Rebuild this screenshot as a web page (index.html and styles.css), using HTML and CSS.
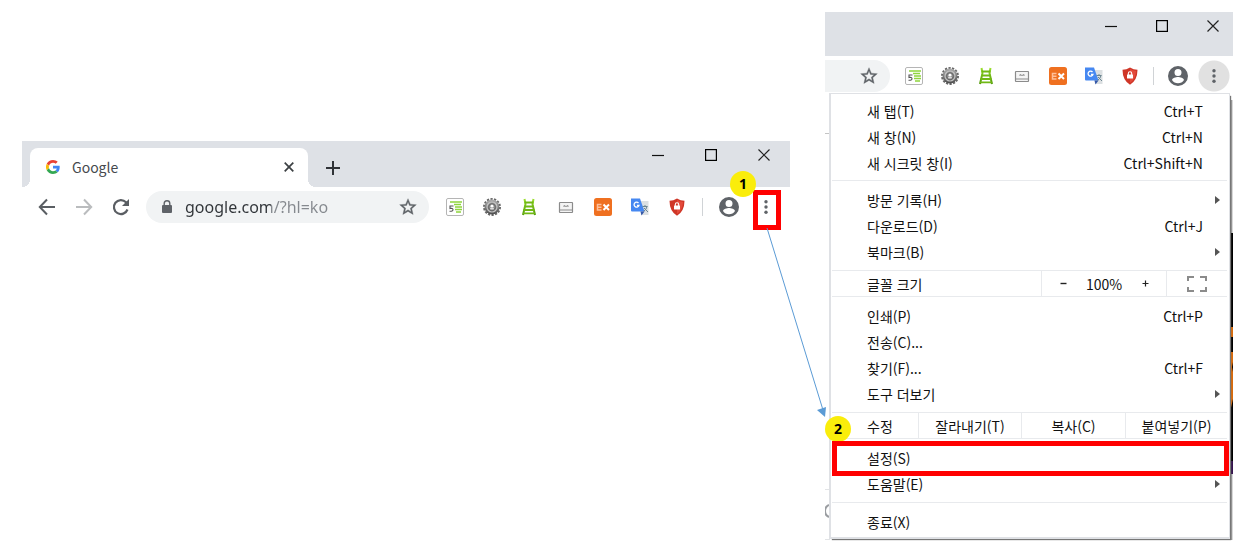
FILE: index.html
```html
<!DOCTYPE html>
<html lang="ko">
<head>
<meta charset="utf-8">
<title>Chrome 설정 메뉴 열기</title>
<link rel="stylesheet" href="styles.css">
</head>
<body>
<svg class="sprite" aria-hidden="true">
  <defs>
    <linearGradient id="metal" x1="0" y1="0" x2="0" y2="1"><stop offset="0" stop-color="#b0b0b0"/><stop offset="1" stop-color="#4c4c4c"/></linearGradient>
    <linearGradient id="leaf" x1="0" y1="0" x2="0" y2="1"><stop offset="0" stop-color="#9be02c"/><stop offset="1" stop-color="#4f960a"/></linearGradient>
  </defs>
  <symbol id="star" viewBox="0 0 24 24"><path fill="#5f6368" stroke="#5f6368" stroke-width=".4" d="M22 9.24l-7.19-.62L12 2 9.19 8.63 2 9.24l5.46 4.73L5.82 21 12 17.27 18.18 21l-1.63-7.03L22 9.24zM12 15.4l-3.76 2.27 1-4.28-3.32-2.88 4.38-.38L12 6.1l1.71 4.04 4.38.38-3.32 2.88 1 4.28L12 15.4z"/></symbol>
  <symbol id="min" viewBox="0 0 12 12"><path d="M0 6.500H12" stroke="#111" stroke-width="1.200"/></symbol>
  <symbol id="max" viewBox="0 0 12 12"><rect x=".6" y=".6" width="10.800" height="10.800" fill="none" stroke="#000" stroke-width="1.200"/></symbol>
  <symbol id="close" viewBox="0 0 12 12"><path d="M.5.500l11 11M11.500.500l-11 11" stroke="#222" stroke-width="1.200"/></symbol>
  <symbol id="notes" viewBox="0 0 18 18"><rect x=".5" y=".5" width="17" height="17" rx="1.500" fill="#fff" stroke="#b5b5b5"/><path d="M4 4h12M8 6.500h7M9 9h7M9 11.500h7M10 14h5" stroke="#8fd53d" stroke-width="1.400"/><path d="M7.500 8H4v2.500q3-.6 3 1.200T3.500 13.300" fill="none" stroke="#555" stroke-width="1.100"/></symbol>
  <symbol id="gear" viewBox="0 0 18 18"><circle cx="9" cy="9" r="8" fill="none" stroke="#666" stroke-width="2" stroke-dasharray="2.200 1.390"/><circle cx="9" cy="9" r="7.500" fill="url(#metal)"/><circle cx="9" cy="9" r="5" fill="none" stroke="#c4c4c4" stroke-width="1.200"/><circle cx="9" cy="9" r="3.300" fill="#999" stroke="#666"/><circle cx="9" cy="8.200" r="1.400" fill="#fff"/><path d="M7.200 10.800h3.600" stroke="#eee" stroke-width="1.200"/></symbol>
  <symbol id="ladder" viewBox="0 0 18 18"><path d="M4.500 1l1 5-2.500 11M13.500 1l-1 5L15 17" fill="none" stroke="url(#leaf)" stroke-width="2"/><path d="M4.500 4.500h9M4.500 8.500h9M3.500 12h11M3 15.300h12" stroke="#70b814" stroke-width="1.800"/></symbol>
  <symbol id="laptop" viewBox="0 0 18 18"><rect x="2.500" y="4.500" width="13" height="10" rx=".5" fill="#f4f4f4" stroke="#8b8b8b" stroke-width="1.200"/><path d="M3 12h12" stroke="#8b8b8b"/><path d="M7 9V7.500l2 1 2-1V9" fill="none" stroke="#8b8b8b"/></symbol>
  <symbol id="ex" viewBox="0 0 18 18"><rect width="18" height="18" rx="2.500" fill="#ef7020"/><path d="M7.500 6.500h-4v5.500h4M3.500 9.200h4" stroke="#ffc09a" stroke-width="1.500" fill="none"/><path d="M9.500 6.500l5.500 5.500M15 6.500L9.500 12" stroke="#fff" stroke-width="2"/></symbol>
  <symbol id="translate" viewBox="0 0 18 18"><path d="M8 3h9.500v14H10z" fill="#dce0e2"/><path d="M0 .5h9l4.500 13H1Q0 13.500 0 12.500z" fill="#4688f1"/><path d="M9.500 13.500h4l-3 4z" fill="#3457a8"/><path d="M7.500 5A2.500 2.500 0 1 0 8 7.300H6" fill="none" stroke="#fff" stroke-width="1.300"/><path d="M11.500 8.500h5M14 7v1.500M16 8.500q-.5 3-3.500 5M13 10l4 4" fill="none" stroke="#6b8590"/></symbol>
  <symbol id="shield" viewBox="0 0 18 18"><path d="M9 .5q3.500 2.200 7.500 2.200Q16.500 13 9 17.800 1.500 13 1.500 2.700 5.500 2.700 9 .5z" fill="#cf3627"/><path d="M9 2.100q2.800 1.700 6.100 1.900Q14.600 12.200 9 16z" fill="#e34a3b"/><rect x="6" y="7.500" width="6" height="4" rx=".5" fill="#fff"/><path d="M7.300 8V6.500a1.700 1.700 0 0 1 3.400 0V8" fill="none" stroke="#fff" stroke-width="1.100"/></symbol>
  <symbol id="avatar" viewBox="2 2 20 20"><path fill="#5f6368" d="M12 2a10 10 0 1 0 0 20 10 10 0 0 0 0-20zm0 3a3.500 3.500 0 1 1 0 7 3.500 3.500 0 0 1 0-7zm0 14.200a7.200 7.200 0 0 1-6-3.200c0-2 4-3.100 6-3.100s6 1.100 6 3.100a7.200 7.200 0 0 1-6 3.200z"/></symbol>
  <symbol id="dots" viewBox="0 0 4 16"><g fill="#5f6368"><circle cx="2" cy="2.700" r="1.700"/><circle cx="2" cy="8" r="1.700"/><circle cx="2" cy="13.300" r="1.700"/></g></symbol>
</svg>

<main class="guide">
  <section class="browser browser-main" aria-label="Google Chrome">
    <header class="strip">
      <div class="tab">
        <svg class="favicon" viewBox="0 0 48 48"><path fill="#ea4335" d="M24 9.500c3.540 0 6.710 1.220 9.210 3.600l6.850-6.850C35.900 2.380 30.470 0 24 0 14.620 0 6.510 5.380 2.560 13.220l7.980 6.190C12.430 13.720 17.740 9.500 24 9.500z"/><path fill="#4285f4" d="M46.980 24.550c0-1.570-.15-3.090-.38-4.550H24v9.020h12.940c-.58 2.960-2.260 5.480-4.780 7.180l7.730 6c4.510-4.180 7.090-10.360 7.090-17.650z"/><path fill="#fbbc05" d="M10.530 28.590a14.500 14.500 0 0 1 0-9.180l-7.980-6.190a24 24 0 0 0 0 21.560l7.980-6.190z"/><path fill="#34a853" d="M24 48c6.480 0 11.930-2.130 15.890-5.810l-7.730-6c-2.150 1.450-4.920 2.300-8.160 2.300-6.260 0-11.570-4.220-13.470-9.910l-7.980 6.190C6.510 42.620 14.620 48 24 48z"/></svg>
        <span class="tab-title">Google</span>
        <button class="plain" aria-label="탭 닫기"><svg width="10" height="10" viewBox="0 0 10 10"><path d="M.7.700l8.600 8.600M9.300.700L.7 9.300" stroke="#3c4043" stroke-width="1.700"/></svg></button>
      </div>
      <button class="plain new-tab" aria-label="새 탭"><svg width="14" height="14" viewBox="0 0 14 14"><path d="M7 0v14M0 7h14" stroke="#303337" stroke-width="2"/></svg></button>
      <div class="window-controls">
        <button class="plain" aria-label="최소화"><svg width="12" height="12"><use href="#min"/></svg></button>
        <button class="plain" aria-label="최대화"><svg width="12" height="12"><use href="#max"/></svg></button>
        <button class="plain" aria-label="닫기"><svg width="12" height="12"><use href="#close"/></svg></button>
      </div>
    </header>
    <div class="toolbar">
      <nav class="nav">
        <button class="plain" aria-label="뒤로"><svg width="18" height="18" viewBox="0 0 18 18"><path d="M9 1.500L1.800 9 9 16.500M2 9h15" fill="none" stroke="#5a5e63" stroke-width="2"/></svg></button>
        <button class="plain" aria-label="앞으로"><svg width="18" height="18" viewBox="0 0 18 18"><path d="M9 1.500L16.200 9 9 16.500M16 9H1" fill="none" stroke="#babcbe" stroke-width="2"/></svg></button>
        <button class="plain" aria-label="새로고침"><svg width="18" height="18" viewBox="0 0 18 18"><path d="M15.500 11.500A7 7 0 1 1 14 4.200L15.500 6" fill="none" stroke="#5a5e63" stroke-width="2.200"/><path d="M17 1v7h-7z" fill="#5a5e63"/></svg></button>
      </nav>
      <div class="omnibox">
        <svg width="10" height="14" viewBox="0 0 10 14"><rect y="5" width="10" height="8" rx="1" fill="#5f6368"/><path d="M2.200 6V3.500a2.800 2.800 0 0 1 5.600 0V6" fill="none" stroke="#5f6368" stroke-width="1.400"/></svg>
        <input class="url" type="text" aria-label="주소창" value="google.com/?hl=ko">
        <button class="plain" aria-label="북마크 추가"><svg width="20" height="20"><use href="#star"/></svg></button>
      </div>
      <div class="extensions">
        <button class="plain" aria-label="메모"><svg><use href="#notes"/></svg></button>
        <button class="plain" aria-label="도구"><svg><use href="#gear"/></svg></button>
        <button class="plain" aria-label="사다리"><svg><use href="#ladder"/></svg></button>
        <button class="plain" aria-label="화면"><svg><use href="#laptop"/></svg></button>
        <button class="plain" aria-label="EX"><svg><use href="#ex"/></svg></button>
        <button class="plain" aria-label="번역"><svg><use href="#translate"/></svg></button>
        <button class="plain" aria-label="보안"><svg><use href="#shield"/></svg></button>
      </div>
      <span class="divider"></span>
      <button class="plain profile" aria-label="프로필"><svg width="20" height="20"><use href="#avatar"/></svg></button>
      <button class="plain more" aria-label="맞춤설정 및 제어"><svg width="4" height="16"><use href="#dots"/></svg><span class="mark mark-more"></span><span class="badge badge-one">1</span></button>
    </div>
  </section>

  <section class="browser browser-menu" aria-label="Chrome 메뉴">
    <header class="strip">
      <div class="window-controls">
        <button class="plain" aria-label="최소화"><svg width="12" height="12"><use href="#min"/></svg></button>
        <button class="plain" aria-label="최대화"><svg width="12" height="12"><use href="#max"/></svg></button>
        <button class="plain" aria-label="닫기"><svg width="12" height="12"><use href="#close"/></svg></button>
      </div>
    </header>
    <div class="toolbar">
      <div class="omnibox">
        <button class="plain" aria-label="북마크 추가"><svg width="20" height="20"><use href="#star"/></svg></button>
      </div>
      <div class="extensions">
        <button class="plain" aria-label="메모"><svg><use href="#notes"/></svg></button>
        <button class="plain" aria-label="도구"><svg><use href="#gear"/></svg></button>
        <button class="plain" aria-label="사다리"><svg><use href="#ladder"/></svg></button>
        <button class="plain" aria-label="화면"><svg><use href="#laptop"/></svg></button>
        <button class="plain" aria-label="EX"><svg><use href="#ex"/></svg></button>
        <button class="plain" aria-label="번역"><svg><use href="#translate"/></svg></button>
        <button class="plain" aria-label="보안"><svg><use href="#shield"/></svg></button>
      </div>
      <span class="divider"></span>
      <button class="plain profile" aria-label="프로필"><svg width="20" height="20"><use href="#avatar"/></svg></button>
      <button class="plain more" aria-label="맞춤설정 및 제어"><svg width="4" height="16"><use href="#dots"/></svg></button>
    </div>
    <div class="page">
      <svg class="page-left" width="5" height="447" viewBox="0 0 5 447" aria-hidden="true"><path d="M0 40.500h5" stroke="#c4c4c4"/><path d="M0 396.500h5M0 446.500h5" stroke="#e2e4e6"/><path d="M5 412a5 6 0 0 0 0 12" fill="none" stroke="#9a9da1" stroke-width="2"/></svg>
      <svg class="page-right" width="3" height="447" viewBox="0 0 3 447" aria-hidden="true"><path d="M0 7h2v440H0z" fill="#9b9b9b"/><path d="M2 7h1v440H2z" fill="#d8d8d8"/><path d="M0 140h3v241H0z" fill="#000"/><path d="M0 234h3v10H0zM0 259h3v10l-1 5 1 5v27l-3 13z" fill="#d96a0a"/><path d="M0 368h3v13H0z" fill="#34134d"/></svg>
      <div class="menu" role="menu">
        <div class="group">
          <button class="item" role="menuitem"><span>새 탭(T)</span><kbd>Ctrl+T</kbd></button>
          <button class="item" role="menuitem"><span>새 창(N)</span><kbd>Ctrl+N</kbd></button>
          <button class="item" role="menuitem"><span>새 시크릿 창(I)</span><kbd>Ctrl+Shift+N</kbd></button>
        </div>
        <div class="group">
          <button class="item sub" role="menuitem"><span>방문 기록(H)</span></button>
          <button class="item" role="menuitem"><span>다운로드(D)</span><kbd>Ctrl+J</kbd></button>
          <button class="item sub" role="menuitem"><span>북마크(B)</span></button>
        </div>
        <div class="cells zoom-row">
          <span class="cells-label">글꼴 크기</span>
          <div class="zoom">
            <button class="plain" aria-label="축소"><svg width="7" height="7" viewBox="0 0 7 7"><path d="M.5 3.500h6" stroke="#222" stroke-width="1.400"/></svg></button>
            <span>100%</span>
            <button class="plain" aria-label="확대"><svg width="7" height="7" viewBox="0 0 7 7"><path d="M.5 3.500h6M3.500.500v6" stroke="#222" stroke-width="1.200"/></svg></button>
          </div>
          <button class="plain full" aria-label="전체화면"><svg width="20" height="16" viewBox="0 0 20 16"><path d="M1 5V1h6M13 1h6v4M19 11v4h-6M7 15H1v-4" fill="none" stroke="#8b8b8b" stroke-width="2"/></svg></button>
        </div>
        <div class="group">
          <button class="item" role="menuitem"><span>인쇄(P)</span><kbd>Ctrl+P</kbd></button>
          <button class="item" role="menuitem"><span>전송(C)...</span></button>
          <button class="item" role="menuitem"><span>찾기(F)...</span><kbd>Ctrl+F</kbd></button>
          <button class="item sub" role="menuitem"><span>도구 더보기</span></button>
        </div>
        <div class="cells edit-row">
          <span class="cells-label">수정</span>
          <button class="plain">잘라내기(T)</button>
          <button class="plain">복사(C)</button>
          <button class="plain">붙여넣기(P)</button>
          <span class="badge badge-two">2</span>
        </div>
        <div class="group">
          <button class="item" role="menuitem"><span>설정(S)</span><span class="mark mark-settings"></span></button>
          <button class="item sub" role="menuitem"><span>도움말(E)</span></button>
        </div>
        <div class="group">
          <button class="item" role="menuitem"><span>종료(X)</span></button>
        </div>
      </div>
    </div>
    <svg class="connector" width="66" height="194" viewBox="0 0 66 194" aria-hidden="true"><path d="M4 2l56 182" stroke="#5b9bd5" stroke-width="1"/><path d="M54 184l9-3-1 10z" fill="#5b9bd5"/></svg>
  </section>
</main>
</body>
</html>
```
FILE: styles.css
```css
* { box-sizing: border-box; }

body {
  margin: 0;
  background: #fff;
  color: #111;
  font: 14px/26px "Noto Sans CJK KR", sans-serif;
}

.sprite { position: absolute; width: 0; height: 0; }

.guide {
  display: grid;
  grid-template-columns: minmax(0, 1fr) 408px;
  gap: 35px;
  align-items: start;
  padding: 12px 15px 14px 22px;
}

.browser { position: relative; }
.browser-main { margin-top: 129px; }

.plain {
  display: flex;
  align-items: center;
  justify-content: center;
  margin: 0;
  padding: 0;
  border: 0;
  background: none;
  color: inherit;
  font: inherit;
}

svg { display: block; flex: none; }

/* Tab strip */
.strip {
  display: flex;
  align-items: flex-end;
  height: 46px;
  padding-left: 8px;
  background: #dee1e6;
}

.browser-menu .strip { height: 44px; }

.tab {
  position: relative;
  display: flex;
  align-items: center;
  gap: 12px;
  width: 278px;
  height: 39px;
  padding: 0 14px 1px 16px;
  border-radius: 8px 8px 0 0;
  background: #fff;
}

.tab::before,
.tab::after {
  content: "";
  position: absolute;
  bottom: 0;
  width: 8px;
  height: 8px;
}

.tab::before { left: -8px; background: radial-gradient(circle at 0 0, transparent 8px, #fff 8px); }
.tab::after { right: -8px; background: radial-gradient(circle at 100% 0, transparent 8px, #fff 8px); }

.favicon { width: 14px; height: 14px; }
.tab-title { flex: 1; color: #45494d; line-height: 24px; }
.new-tab { width: 50px; height: 39px; }

.window-controls {
  display: flex;
  align-self: flex-start;
  margin-left: auto;
}

.window-controls .plain { width: 53px; height: 28px; }
.browser-menu .window-controls .plain { width: 51px; }
.browser-menu .window-controls { margin-right: -5px; }

/* Toolbar */
.toolbar {
  display: flex;
  align-items: center;
  height: 40px;
  padding: 0 6px;
}

.browser-menu .toolbar { height: 37px; padding: 3px 1px 0 0; }

.nav { display: flex; margin-right: 7px; }
.nav .plain { width: 37px; height: 32px; }

.omnibox {
  display: flex;
  flex: 1;
  align-items: center;
  min-width: 0;
  height: 32px;
  margin-right: 7px;
  padding: 0 11px 0 16px;
  border-radius: 0 16px 16px 0;
  background: #f1f3f4;
}

.browser-main .omnibox { border-radius: 16px; }
.browser-menu .omnibox { justify-content: flex-end; margin-right: 6px; }

.url {
  flex: 1;
  min-width: 0;
  margin-left: 13px;
  padding: 0;
  border: 0;
  background: linear-gradient(90deg, #303438 86px, #85898e 86px);
  background-clip: text;
  color: transparent;
  font: 16px/24px "Noto Sans", sans-serif;
}

.extensions { display: flex; }
.extensions svg { width: 18px; height: 18px; }
.extensions .plain,
.profile,
.more { width: 37px; height: 32px; }

.browser-menu .extensions .plain,
.browser-menu .profile,
.browser-menu .more { width: 36px; }

.divider { width: 1px; height: 18px; margin: 0 7px; background: #d0d3d6; }
.browser-menu .divider { margin: 0 6px 0 5px; }

.more { position: relative; }
.browser-menu .more { background: radial-gradient(circle, #e1e1e1 15px, transparent 16px); }

/* Page and menu */
.page {
  position: relative;
  padding: 0 3px 0 4px;
}

.page-left { position: absolute; top: 0; left: 0; }
.page-right { position: absolute; top: 0; right: 0; }

.menu {
  position: relative;
  padding: 0 2px 0 1px;
  border: solid #dfe1e5;
  border-width: 1px 1px 2px 2px;
  background: #fff;
  box-shadow: 2px 2px 1px -1px #777;
}

.group { padding: 6px 0 5px; }
.group:first-child { padding: 4px 0; }
.group:last-child { padding-bottom: 2px; }
.group + .group { border-top: 1px solid #e8eaed; }

.item {
  position: relative;
  display: flex;
  align-items: center;
  justify-content: space-between;
  width: 100%;
  height: 26px;
  padding: 0 24px 0 35px;
  border: 0;
  background: none;
  color: inherit;
  font: inherit;
  text-align: left;
}

.item kbd { font: inherit; }

.sub { padding-right: 7px; }
.sub::after {
  content: "";
  border: solid transparent;
  border-width: 4px 0 4px 5px;
  border-left-color: #555;
}

.cells {
  position: relative;
  display: grid;
  height: 27px;
  border: solid #e8eaed;
  border-width: 1px 0;
}

.zoom-row { grid-template-columns: 1fr 125px 61px; }
.edit-row { grid-template-columns: 86px 103px 104px 1fr; }
.cells-label { padding-left: 35px; }
.cells > :not(.cells-label):not(.badge) { height: 25px; border-left: 1px solid #e8eaed; }

.zoom { display: flex; align-items: center; justify-content: space-between; }
.zoom .plain { width: 42px; height: 25px; }

/* Callouts */
.mark { position: absolute; border: 5px solid #f00; pointer-events: none; }
.mark-more { top: -1px; left: 6px; width: 28px; height: 40px; }
.mark-settings { top: -4px; left: 0; right: -2px; height: 35px; }

.badge {
  position: absolute;
  width: 26px;
  height: 26px;
  border-radius: 50%;
  background: #faed0b;
  color: #000;
  font: bold 14px/26px "Noto Sans", sans-serif;
  text-align: center;
}

.badge-one { top: -20px; left: -17px; }
.badge-two { top: 3px; left: -7px; }

.connector { position: absolute; top: 214px; left: -62px; }
```
